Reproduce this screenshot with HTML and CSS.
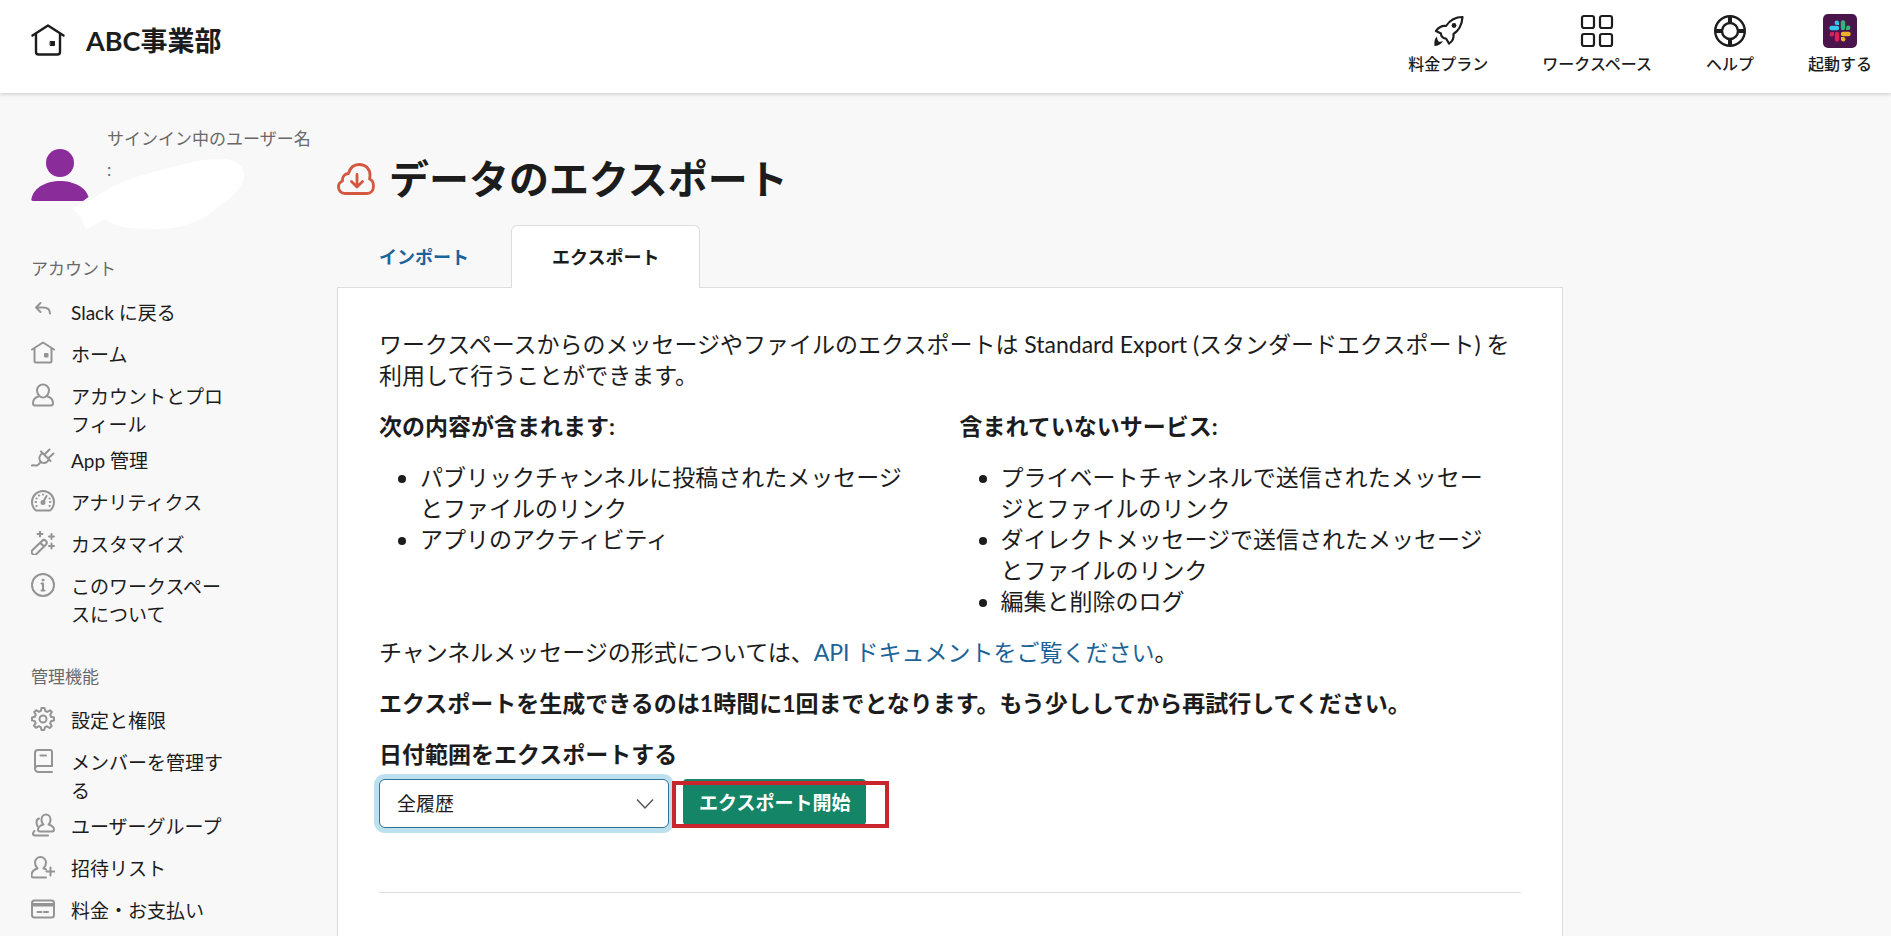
FILE: index.html
```html
<!DOCTYPE html>
<html lang="ja">
<head>
<meta charset="utf-8">
<meta name="viewport" content="width=device-width, initial-scale=1">
<title>データのエクスポート</title>
<link rel="stylesheet" href="styles.css">
</head>
<body>
<header class="header">
  <a class="brand" href="#">
    <svg class="brand-icon" viewBox="0 0 34 32" fill="none" stroke="currentColor" stroke-width="2.400" stroke-linecap="round" stroke-linejoin="round"><path d="M1.500 11.500 17 1.500l15.500 10M5 9.500V28a2.500 2.500 0 0 0 2.500 2.500h19A2.500 2.500 0 0 0 29 28V9.500"/><path d="M19.500 17.500h4v4h-4z" fill="currentColor" stroke-width="1"/></svg>
    <span>ABC事業部</span>
  </a>
  <nav class="top-nav">
    <a class="top-link" href="#">
      <svg class="top-icon" viewBox="0 0 34 34" fill="none" stroke="currentColor" stroke-width="2.200" stroke-linejoin="round"><path d="M31.500 3C25 3 19 6 15 12c-4-.500-7.500 1.500-10 5l5 2.500c-.300 2.500 2.200 5 5 5l3 5c3.500-2 5-5.500 4.500-9.500C28.500 16 31 10 31.500 3z"/><circle cx="23" cy="11.500" r="2.400" fill="currentColor" stroke="none"/><path d="M6 22.500c-2.500 2-3 5.500-2.500 9.500 3.500 0 6.500-1.500 8.500-5-1.500.800-3 1-4.500.500-1-1.500-1.500-3-1.500-5z" fill="currentColor" stroke="none"/></svg>
      <span>料金プラン</span>
    </a>
    <a class="top-link" href="#">
      <svg class="top-icon" viewBox="0 0 34 34" fill="none" stroke="currentColor" stroke-width="2.200"><rect x="2" y="2" width="12" height="12" rx="2"/><rect x="20" y="2" width="12" height="12" rx="2"/><rect x="2" y="20" width="12" height="12" rx="2"/><rect x="20" y="20" width="12" height="12" rx="2"/></svg>
      <span>ワークスペース</span>
    </a>
    <a class="top-link" href="#">
      <svg class="top-icon" viewBox="0 0 34 34" fill="none" stroke="currentColor" stroke-width="2.400"><circle cx="17" cy="17" r="14.800"/><circle cx="17" cy="17" r="8"/><path d="M17 2v7M17 25v7M2 17h7M25 17h7" stroke-width="4"/></svg>
      <span>ヘルプ</span>
    </a>
    <a class="top-link" href="#">
      <svg class="top-icon" viewBox="0 0 34 34"><rect width="34" height="34" rx="5" fill="#4a154b"/><g stroke-width="4.400" stroke-linecap="round"><path d="M8.500 14H14" stroke="#36c5f0"/><path d="M20 8.500V14" stroke="#2eb67d"/><path d="M20 20h5.500" stroke="#ecb22e"/><path d="M14 20v5.500" stroke="#e01e5a"/></g><path d="M16 11h-2.200a2.200 2.200 0 1 1 2.200-2.200z" fill="#36c5f0"/><path d="M23 16v-2.200a2.200 2.200 0 1 1 2.200 2.200z" fill="#2eb67d"/><path d="M18 23h2.200a2.200 2.200 0 1 1-2.200 2.200z" fill="#ecb22e"/><path d="M11 18v2.200A2.200 2.200 0 1 1 8.800 18z" fill="#e01e5a"/></svg>
      <span>起動する</span>
    </a>
  </nav>
</header>

<div class="layout">
  <aside class="sidebar">
    <div class="user">
      <svg class="avatar" viewBox="0 0 58 54" fill="#8b2c9b"><circle cx="29" cy="15" r="14"/><path d="M2 53c-1.500 0-2-1-1.500-2.500C3 39 16 33 29 33s26 6 28.500 16L52 53z"/></svg>
      <p class="user-label">サインイン中のユーザー名<br>:</p>
      <svg class="user-mask" viewBox="0 0 172 72" fill="#fff"><path d="M0 50 22 40C40 28 52 22 75 16 100 9 125 1 148 1c14 0 24 5 24 16 0 12-12 22-28 34-14 11-32 19-54 20-28 1-50-2-56-10L14 71 8 58z"/></svg>
    </div>

    <h2 class="side-title">アカウント</h2>
    <ul class="side-list">
      <li><a class="side-link" href="#"><svg class="side-icon" viewBox="0 0 24 24"><path d="M9.500 4 5 8.500 9.500 13M5 8.500h7c4 0 7 2 7 6"/></svg><span>Slack に戻る</span></a></li>
      <li><a class="side-link" href="#"><svg class="side-icon" viewBox="0 0 24 24"><path d="M1 8.500 12 1.500l11 7M3.500 7v13A1.500 1.500 0 0 0 5 21.500h14a1.500 1.500 0 0 0 1.500-1.500V7"/><path d="M14 13h2.500v2.500H14z" fill="currentColor"/></svg><span>ホーム</span></a></li>
      <li><a class="side-link" href="#"><svg class="side-icon" viewBox="0 0 24 24"><path d="M8.500 13C7 11.500 6 9.500 6 7.500a6 6 0 0 1 12 0c0 2-1 4-2.500 5.500 4 1 6.500 3.500 6.500 7 0 1.500-.500 2.500-2 2.500H4c-1.500 0-2-1-2-2.500 0-3.500 2.500-6 6.500-7zM8.500 13c2 2 5 2 7 0"/></svg><span>アカウントとプロフィール</span></a></li>
      <li><a class="side-link" href="#"><svg class="side-icon" viewBox="0 0 24 24"><path d="M10 4.500 19.500 14M11.500 6c-3 2-4 5.500-2 8.500 2.500 2.500 6 2 8.500-2M14 7l4.500-4.500M17.500 11l5-4.500M9.500 15c-1.500 2.500-3 4-5 3.500-1.500-.500-2.500-.500-3.500 0"/></svg><span>App 管理</span></a></li>
      <li><a class="side-link" href="#"><svg class="side-icon" viewBox="0 0 24 24"><path d="M5 21.500C2.500 19.500 1 16.500 1 13a11 11 0 0 1 22 0c0 3.500-1.500 6.500-4 8.500z"/><path d="M12 13.500 15.500 7"/><circle cx="12" cy="13.500" r="1.500" fill="currentColor"/><path d="M4.500 13h.500M19 13h.500M5.500 9.500h.200M8 6.500h.200M12 5.500h.100M18.500 9.500h.200M5.500 17h.200M18.500 17h.200"/></svg><span>アナリティクス</span></a></li>
      <li><a class="side-link" href="#"><svg class="side-icon" viewBox="0 0 24 24"><path d="m1.500 19 9.500-9a2.600 2.600 0 0 1 4 3.500L5.500 23a2.600 2.600 0 0 1-4-4zM9.500 12l3.500 3.500M9 .500v5M6.500 3h5M20.500 3v5M18 5.500h5M20.500 12.500v5M18 15h5"/></svg><span>カスタマイズ</span></a></li>
      <li><a class="side-link" href="#"><svg class="side-icon" viewBox="0 0 24 24"><circle cx="12" cy="12" r="11"/><path d="M10.500 10.500H12V17M10.500 17.500h3"/><circle cx="12" cy="7" r="1" fill="currentColor" stroke-width="1"/></svg><span>このワークスペースについて</span></a></li>
    </ul>

    <h2 class="side-title">管理機能</h2>
    <ul class="side-list">
      <li><a class="side-link" href="#"><svg class="side-icon" viewBox="0 0 24 24"><circle cx="12" cy="12" r="3.500"/><path d="M10.500 1h3l.800 3 2 .900L19 3.300 20.900 5l-1.700 2.700.800 2.100 3 .700v3l-3 .800-.900 2 1.600 2.700-2 2-2.700-1.700-2 .800-.700 2.900h-2.800l-.800-2.900-2-.900L5 20.800l-2-2 1.700-2.700-.900-2L1 13.400v-2.900l2.900-.700.900-2.100L3.200 5l2-1.900 2.600 1.700 2-.900z"/></svg><span>設定と権限</span></a></li>
      <li><a class="side-link" href="#"><svg class="side-icon" viewBox="0 0 24 24"><path d="M21 17V3a2 2 0 0 0-2-2H7a3 3 0 0 0-3 3v15.500A3.500 3.500 0 0 0 7.500 23H21M4 19.500C4 18 5 17 7 17h14M9.500 6.500h5.500"/></svg><span>メンバーを管理する</span></a></li>
      <li><a class="side-link" href="#"><svg class="side-icon" viewBox="0 0 24 24"><path d="M12.500 11.500C11 10.500 10.500 8.500 10.500 6.500c0-3 2-5 4.500-5s4.500 2 4.500 5c0 2-.500 4-2 5 3.500 1 5.500 2.500 5.500 5 0 1.500-.500 2-2 2H9c-1.500 0-2-.500-2-2 0-2.500 2-4 5.500-5z"/><path d="M8 5.500c-2 .500-2.500 2-2.500 4 0 1.500.500 2.500 1 3.500M3.500 18C2.500 19 2 19.500 2 20.500c0 1.500.500 2 2 2h13"/></svg><span>ユーザーグループ</span></a></li>
      <li><a class="side-link" href="#"><svg class="side-icon" viewBox="0 0 24 24"><path d="M6.500 13.500C5 12 4 10 4 7.500a5.500 5.500 0 0 1 11 0c0 2.500-1 4.500-2.500 6 1 .200 2 .500 2.500 1M6.500 13.500C3 14.500.500 17 .500 20.500c0 1.500.500 2 2 2H15M19.500 12.500v8M15.500 16.500h8"/></svg><span>招待リスト</span></a></li>
      <li><a class="side-link" href="#"><svg class="side-icon" viewBox="0 0 24 24"><rect x="1" y="3.500" width="22" height="17" rx="2.500"/><path d="M1 8.500h22M6.500 15h4M13 15h4"/><path d="M1 7h22"/></svg><span>料金・お支払い</span></a></li>
    </ul>
  </aside>

  <main class="content">
    <h1 class="page-title">
      <svg class="title-icon" viewBox="0 0 38 32" fill="none" stroke="#d4573f" stroke-width="2.800" stroke-linecap="round" stroke-linejoin="round"><path d="M8 30.500c-4 0-6.500-3-6.500-6.500 0-3 1.500-5 4-6-.500-4 2-7.500 6-7.500C13 5 17 1.500 22 1.500c7 0 11.500 5 11 11.500-.100 1-.200 2-.500 3 2.500 1 4 4 4 7 0 4.500-2.500 7.500-6.500 7.500z"/><path d="M20 11.500v12M14.500 18.500 20 24l5.500-5.500"/></svg>
      <span>データのエクスポート</span>
    </h1>

    <nav class="tabs">
      <a class="tab" href="#">インポート</a>
      <a class="tab tab-active" href="#" aria-current="page">エクスポート</a>
    </nav>

    <section class="panel">
      <p>ワークスペースからのメッセージやファイルのエクスポートは Standard Export (スタンダードエクスポート) を利用して行うことができます。</p>
      <div class="columns">
        <div class="column">
          <h3>次の内容が含まれます:</h3>
          <ul>
            <li>パブリックチャンネルに投稿されたメッセージとファイルのリンク</li>
            <li>アプリのアクティビティ</li>
          </ul>
        </div>
        <div class="column">
          <h3>含まれていないサービス:</h3>
          <ul>
            <li>プライベートチャンネルで送信されたメッセージとファイルのリンク</li>
            <li>ダイレクトメッセージで送信されたメッセージとファイルのリンク</li>
            <li>編集と削除のログ</li>
          </ul>
        </div>
      </div>
      <p>チャンネルメッセージの形式については、<a class="doc-link" href="#">API ドキュメントをご覧ください</a>。</p>
      <p><strong>エクスポートを生成できるのは1時間に1回までとなります。もう少ししてから再試行してください。</strong></p>
      <form class="export-form">
        <label class="export-label" for="range">日付範囲をエクスポートする</label>
        <div class="export-row">
          <div class="select-wrap">
            <select class="select" id="range"><option>全履歴</option></select>
            <svg class="chevron" viewBox="0 0 18 12" fill="none" stroke="#555" stroke-width="1.500"><path d="m1 1.500 8 8.500 8-8.500"/></svg>
          </div>
          <div class="button-wrap">
            <button class="button" type="button">エクスポート開始</button>
          </div>
        </div>
      </form>
      <hr class="rule">
    </section>
  </main>
</div>
</body>
</html>
```
FILE: styles.css
```css
* { box-sizing: border-box; }

body {
  margin: 0;
  min-height: 100vh;
  display: flex;
  flex-direction: column;
  background: #f8f8f8;
  color: #1d1c1d;
  font-family: Lato, "Noto Sans CJK JP", sans-serif;
  font-size: 23px;
  line-height: 31px;
}

h1, h2, h3, p, ul { margin: 0; }
a { color: inherit; text-decoration: none; }
svg { display: block; flex: none; }

.header {
  position: relative;
  display: flex;
  justify-content: space-between;
  align-items: flex-start;
  padding: 14px 19px 16px 31px;
  background: #fff;
  box-shadow: 0 1px 4px rgba(0, 0, 0, 0.2);
}

.brand {
  display: flex;
  align-items: center;
  gap: 21px;
  padding-top: 10px;
  font-size: 27px;
  font-weight: 700;
}
.brand-icon { width: 34px; height: 32px; }

.top-nav { display: flex; gap: 54px; }
.top-link {
  display: flex;
  flex-direction: column;
  align-items: center;
  gap: 2px;
  font-size: 16px;
  font-weight: 500;
  line-height: 27px;
}
.top-icon { width: 34px; height: 34px; }

.layout {
  flex: 1;
  display: grid;
  grid-template-columns: 282px minmax(0, 1226px);
  column-gap: 24px;
  padding-left: 31px;
}

.sidebar { padding-top: 30px; }

.user {
  position: relative;
  display: flex;
  align-items: flex-start;
  gap: 18px;
  margin-bottom: 53px;
}
.avatar { width: 58px; height: 54px; margin-top: 25px; }
.user-label {
  color: #696969;
  font-size: 17px;
  line-height: 31px;
}
.user-mask {
  position: absolute;
  left: 41px;
  top: 35px;
  width: 172px;
  height: 72px;
}

.side-title {
  color: #696969;
  font-size: 17px;
  font-weight: 400;
  line-height: 28px;
  margin-bottom: 12px;
}
.side-list {
  list-style: none;
  padding: 0;
  margin-bottom: 30px;
}
.side-link {
  display: flex;
  align-items: flex-start;
  gap: 16px;
  width: 200px;
  min-height: 42px;
  padding: 4px 0;
  font-size: 19px;
  line-height: 28px;
}
.side-icon {
  width: 24px;
  height: 24px;
  color: #949494;
  fill: none;
  stroke: currentColor;
  stroke-width: 2;
  stroke-linecap: round;
  stroke-linejoin: round;
}

.content {
  display: flex;
  flex-direction: column;
}

.page-title {
  display: flex;
  align-items: center;
  gap: 14px;
  padding: 58px 0 18px;
  font-size: 40px;
  font-weight: 700;
  line-height: 56px;
}
.title-icon { width: 38px; height: 32px; }

.tabs {
  display: flex;
  font-size: 18px;
  font-weight: 700;
}
.tab {
  padding: 17px 42px 15px;
  color: #1c6398;
  line-height: 30px;
}
.tab-active {
  position: relative;
  border: 1px solid #ddd;
  border-bottom: 0;
  border-radius: 6px 6px 0 0;
  margin-bottom: -1px;
  padding: 16px 40px;
  background: #fff;
  color: inherit;
}

.panel {
  flex: 1;
  padding: 41px 41px 42px;
  border: 1px solid #ddd;
  border-bottom: 0;
  background: #fff;
}
.panel p { margin-bottom: 20px; }

.columns {
  display: grid;
  grid-template-columns: 1fr 1fr;
  gap: 19px;
  margin-bottom: 20px;
}
.column { padding-right: 24px; }
.column h3 {
  margin-bottom: 20px;
  font-size: 23px;
  font-weight: 700;
}
.column ul { padding-left: 41px; }

.doc-link { color: #1c6398; }

.export-label { display: block; font-weight: 700; }
.export-row {
  display: flex;
  align-items: flex-start;
  gap: 14px;
  margin-top: 9px;
}
.select-wrap { position: relative; width: 290px; }
.select {
  appearance: none;
  display: block;
  width: 100%;
  height: 49px;
  padding: 0 17px;
  border: 1px solid #2f7396;
  border-radius: 6px;
  background: #fff;
  box-shadow: 0 0 0 5px #bde0ef;
  color: #1d1c1d;
  font: inherit;
  font-size: 19px;
}
.chevron {
  position: absolute;
  right: 15px;
  top: 19px;
  width: 18px;
  height: 12px;
  pointer-events: none;
}
.button-wrap { position: relative; }
.button-wrap::after {
  content: "";
  position: absolute;
  inset: 2px -23px -3px -11px;
  border: 4px solid #c9252d;
  pointer-events: none;
}
.button {
  display: block;
  height: 46px;
  padding: 0 16px;
  border: 0;
  border-radius: 4px;
  background: #148567;
  color: #fff;
  font: inherit;
  font-size: 19px;
  font-weight: 700;
}

.rule {
  height: 1px;
  margin: 64px 0 0;
  border: 0;
  background: #ddd;
}
```
